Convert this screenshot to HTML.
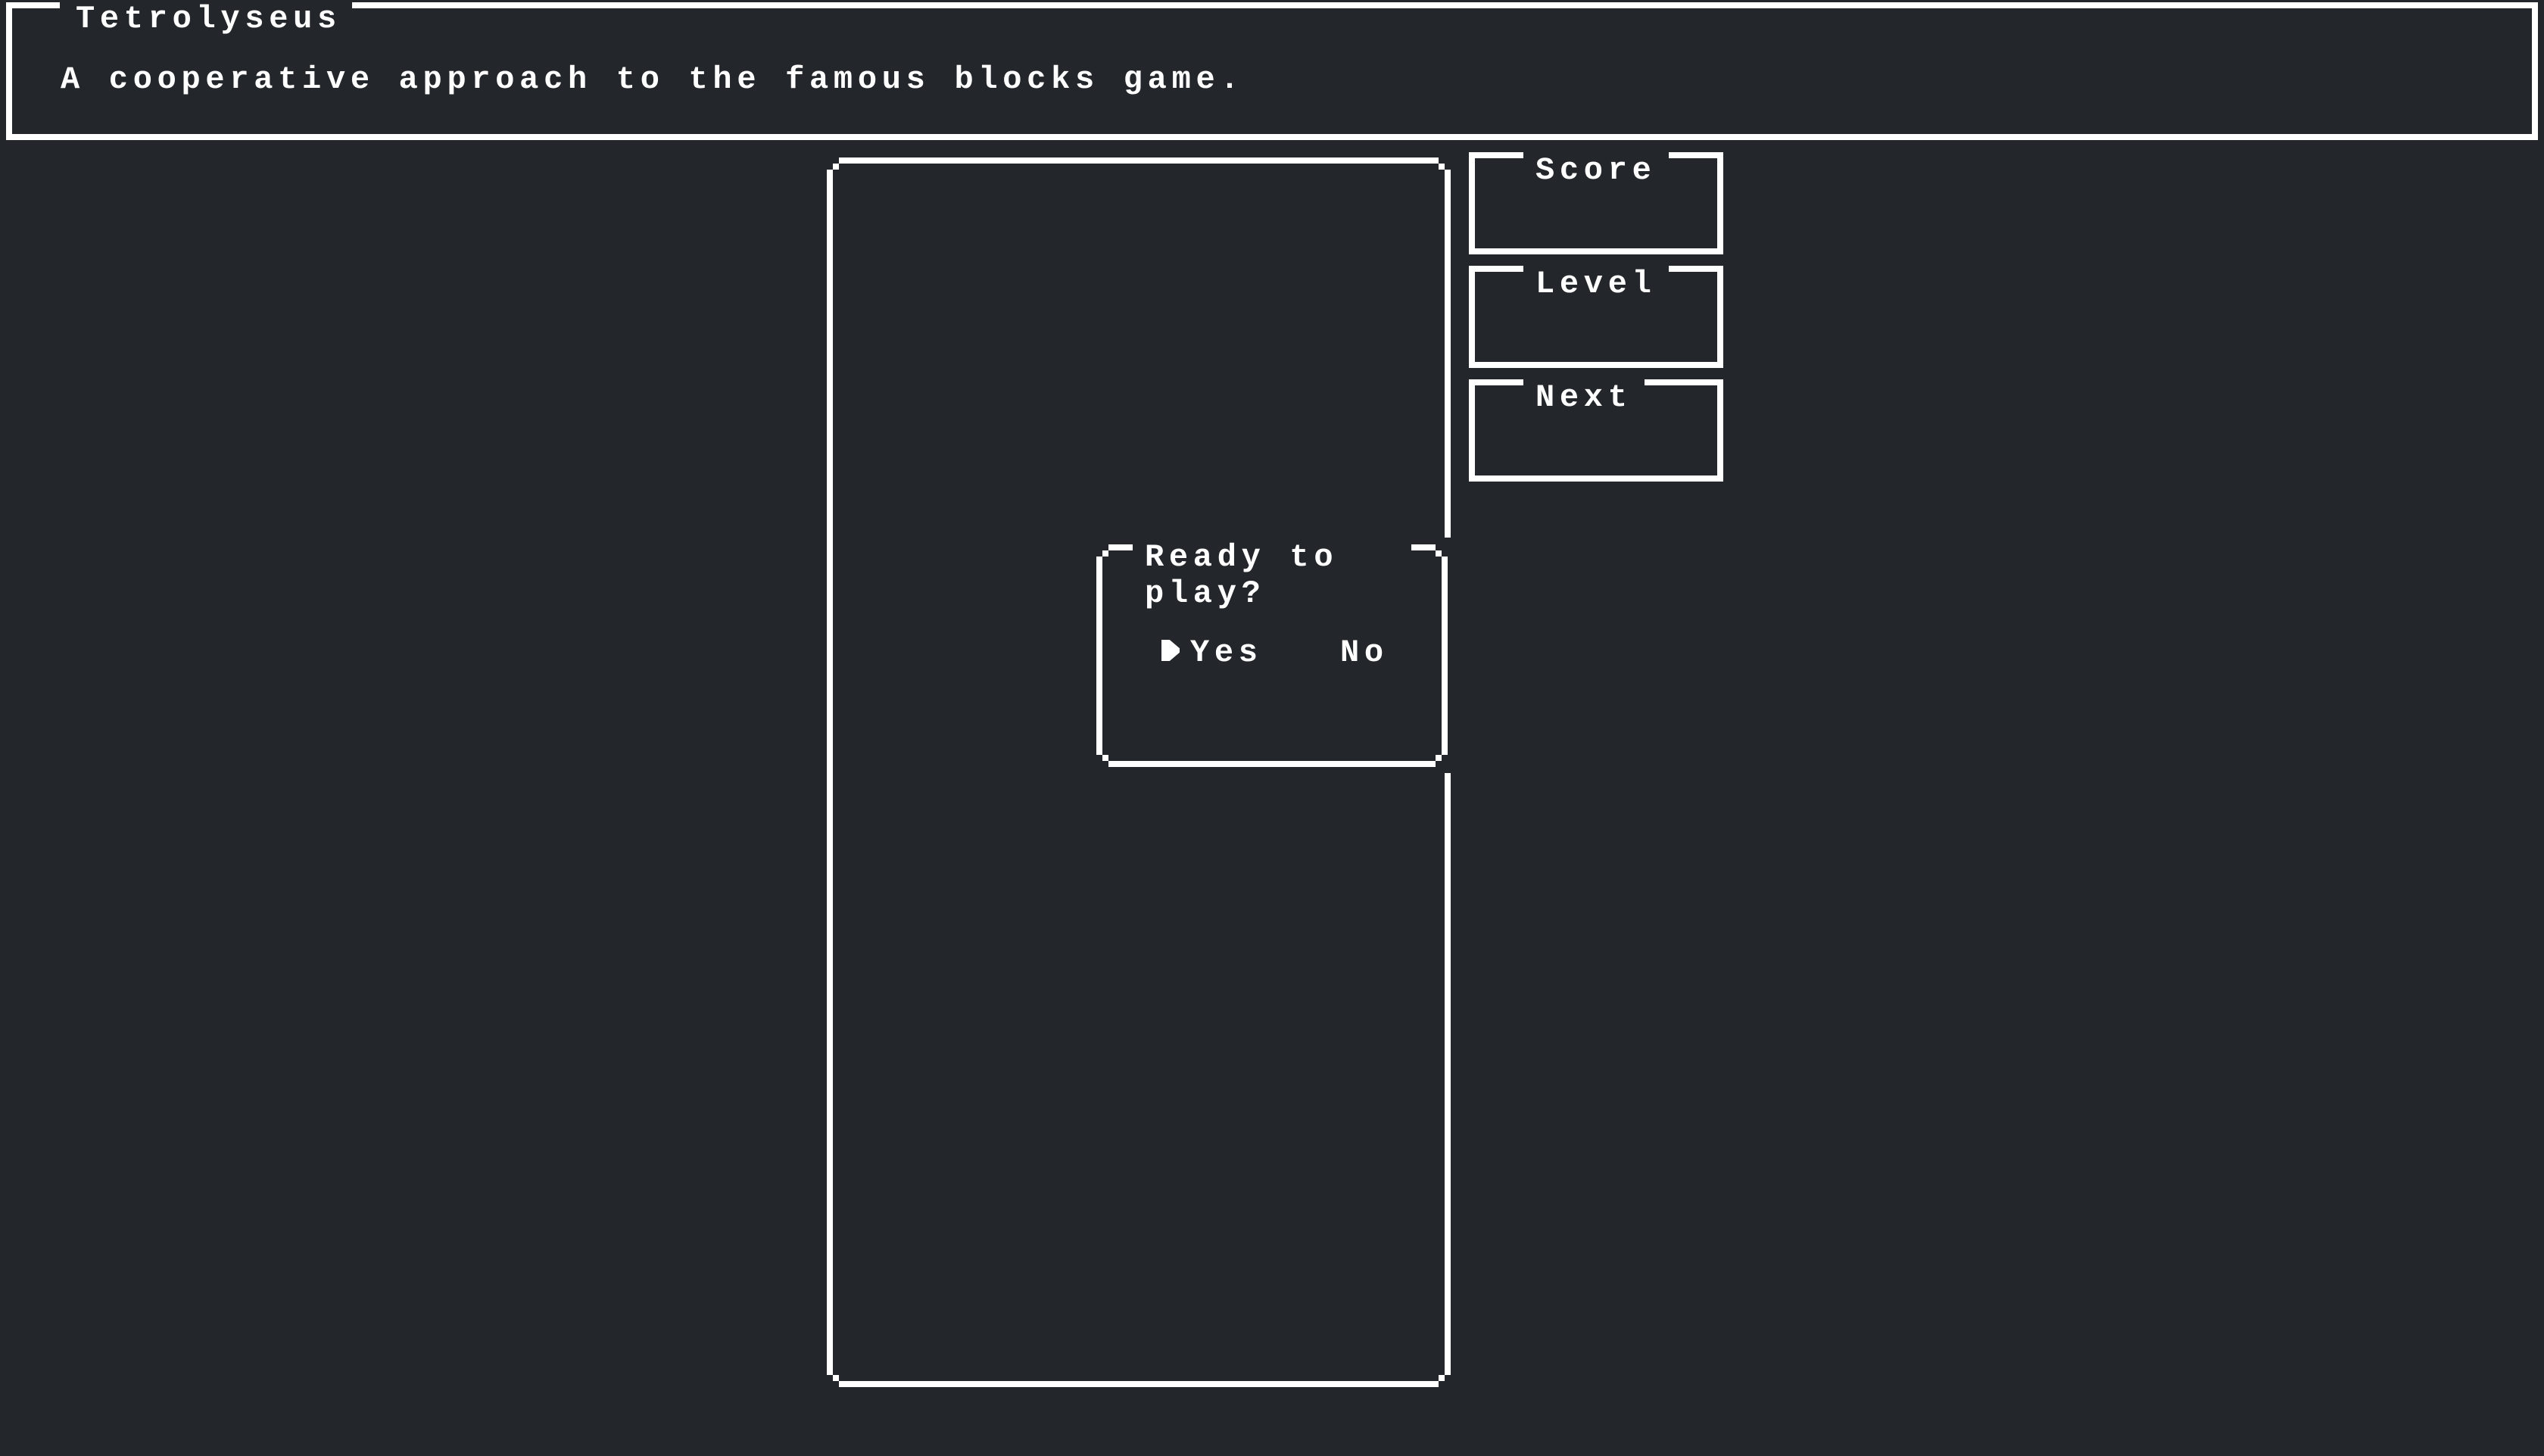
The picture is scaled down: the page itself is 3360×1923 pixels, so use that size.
<!DOCTYPE html>
<html><head><meta charset="utf-8"><style>
html,body{margin:0;padding:0;}
body{width:3360px;height:1923px;background:#23262a;position:relative;overflow:hidden;
font-family:"Liberation Mono",monospace;font-weight:bold;color:#fff;}
.b{position:absolute;background:#fff;}
.t{position:absolute;font-size:42px;line-height:42px;letter-spacing:6.7px;white-space:pre;}
</style></head><body>
<!-- header -->
<div class="b" style="left:8px;top:3px;width:71px;height:8px"></div>
<div class="b" style="left:465px;top:3px;width:2887px;height:8px"></div>
<div class="b" style="left:8px;top:3px;width:8px;height:182px"></div>
<div class="b" style="left:3344px;top:3px;width:8px;height:182px"></div>
<div class="b" style="left:8px;top:177px;width:3344px;height:8px"></div>
<div class="t" style="left:100px;top:4px">Tetrolyseus</div>
<div class="t" style="left:80px;top:84px">A cooperative approach to the famous blocks game.</div>

<!-- board -->
<div class="b" style="left:1108px;top:208px;width:792px;height:8px"></div>
<div class="b" style="left:1100px;top:216px;width:8px;height:8px"></div>
<div class="b" style="left:1900px;top:216px;width:8px;height:8px"></div>
<div class="b" style="left:1092px;top:224px;width:8px;height:1592px"></div>
<div class="b" style="left:1908px;top:224px;width:8px;height:486px"></div>
<div class="b" style="left:1908px;top:1021px;width:8px;height:795px"></div>
<div class="b" style="left:1100px;top:1816px;width:8px;height:8px"></div>
<div class="b" style="left:1900px;top:1816px;width:8px;height:8px"></div>
<div class="b" style="left:1108px;top:1824px;width:792px;height:8px"></div>

<!-- dialog -->
<div class="b" style="left:1464px;top:719px;width:32px;height:8px"></div>
<div class="b" style="left:1864px;top:719px;width:32px;height:8px"></div>
<div class="b" style="left:1456px;top:727px;width:8px;height:8px"></div>
<div class="b" style="left:1896px;top:727px;width:8px;height:8px"></div>
<div class="b" style="left:1448px;top:735px;width:8px;height:262px"></div>
<div class="b" style="left:1904px;top:735px;width:8px;height:262px"></div>
<div class="b" style="left:1456px;top:997px;width:8px;height:8px"></div>
<div class="b" style="left:1896px;top:997px;width:8px;height:8px"></div>
<div class="b" style="left:1464px;top:1005px;width:432px;height:8px"></div>
<div class="t" style="left:1512px;top:715px">Ready to</div>
<div class="t" style="left:1512px;top:763px">play?</div>
<div class="b" style="left:1534px;top:845px;width:24px;height:28px;clip-path:polygon(0 0,45% 0,100% 40%,100% 60%,45% 100%,0 100%)"></div>
<div class="t" style="left:1572px;top:841px">Yes</div>
<div class="t" style="left:1770px;top:841px">No</div>

<!-- score -->
<div class="b" style="left:1940px;top:201px;width:72px;height:8px"></div>
<div class="b" style="left:2204px;top:201px;width:72px;height:8px"></div>
<div class="b" style="left:1940px;top:201px;width:8px;height:135px"></div>
<div class="b" style="left:2268px;top:201px;width:8px;height:135px"></div>
<div class="b" style="left:1940px;top:328px;width:336px;height:8px"></div>
<div class="t" style="left:2028px;top:204px">Score</div>
<!-- level -->
<div class="b" style="left:1940px;top:351px;width:72px;height:8px"></div>
<div class="b" style="left:2204px;top:351px;width:72px;height:8px"></div>
<div class="b" style="left:1940px;top:351px;width:8px;height:135px"></div>
<div class="b" style="left:2268px;top:351px;width:8px;height:135px"></div>
<div class="b" style="left:1940px;top:478px;width:336px;height:8px"></div>
<div class="t" style="left:2028px;top:354px">Level</div>
<!-- next -->
<div class="b" style="left:1940px;top:501px;width:72px;height:8px"></div>
<div class="b" style="left:2172px;top:501px;width:104px;height:8px"></div>
<div class="b" style="left:1940px;top:501px;width:8px;height:135px"></div>
<div class="b" style="left:2268px;top:501px;width:8px;height:135px"></div>
<div class="b" style="left:1940px;top:628px;width:336px;height:8px"></div>
<div class="t" style="left:2028px;top:504px">Next</div>
</body></html>
